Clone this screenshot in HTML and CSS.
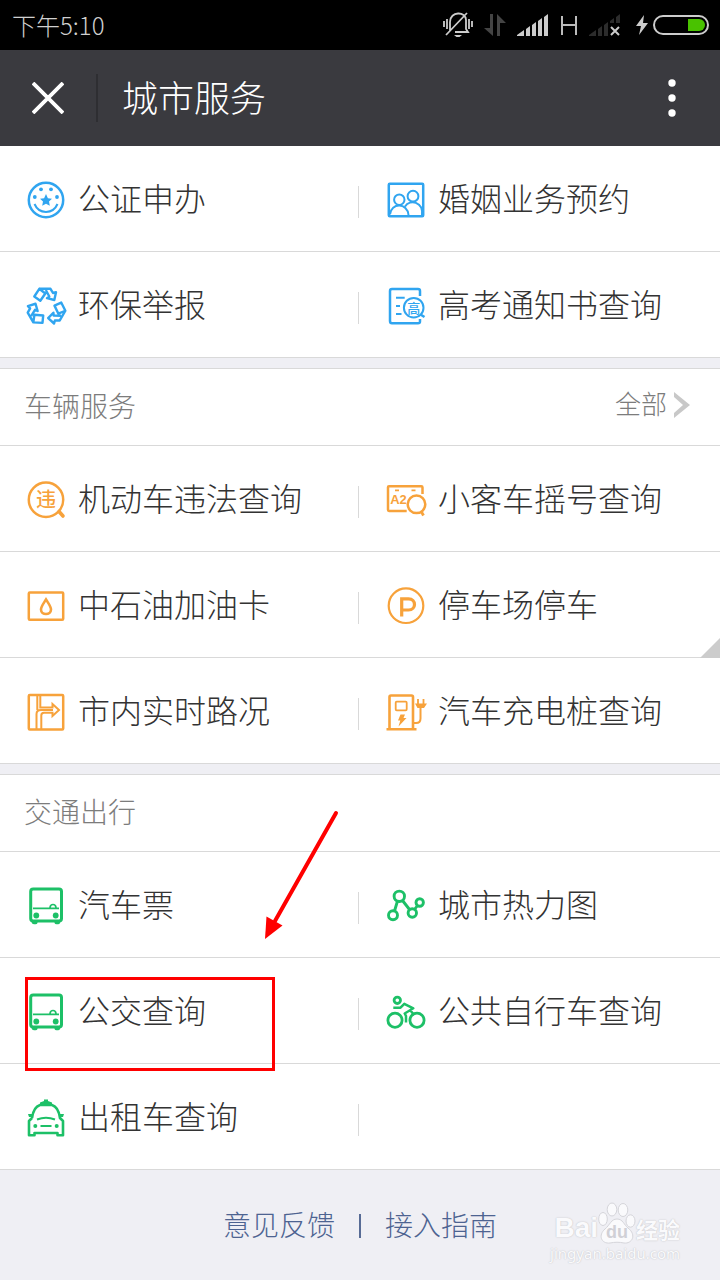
FILE: index.html
```html
<!DOCTYPE html>
<html lang="zh-CN">
<head>
<meta charset="utf-8">
<meta name="viewport" content="width=device-width, initial-scale=1">
<title>城市服务</title>
<link rel="stylesheet" href="styles.css">
</head>
<body>
<svg class="sprite" aria-hidden="true">
  <symbol id="bus" viewBox="0 0 40 40">
    <rect x="4.700" y="3" width="30.800" height="32" rx="2.500" stroke-width="3"/>
    <path d="M7 22.300H33M24 21.500C24.500 17.500 29.500 17.500 30 21.500" stroke-width="1.700"/>
    <g fill="currentColor" stroke="none"><circle cx="10.300" cy="29.500" r="2.900"/><circle cx="29.700" cy="29.500" r="2.900"/><path d="M5.500 35H11.500V37Q11 38.300 9.500 38.300H8Q6 38.300 5.500 36zM28.500 35H34.500L34 37Q33.500 38.300 32 38.300H30.500Q29 38.300 28.500 37z"/></g>
  </symbol>
</svg>

<div class="status">
  <time class="clock">下午5:10</time>
  <div class="indicators">
    <svg width="30" height="26" viewBox="0 0 30 26" fill="none" stroke="#ccc" stroke-width="1.800"><path d="M1 9V15M4 7V17M26 7V17M29 9V15M7 19V10C7 -1 23 -1 23 8V17L25 20H12M3 23L24 1"/><path d="M11 23H19L16.500 25H13.500z" fill="#ccc" stroke="none"/></svg>
    <svg width="22" height="24" viewBox="0 0 22 24" fill="#444"><path d="M6 1H9V23L0 15H6zM13 1L22 10H16V23H13z"/></svg>
    <svg width="32" height="24" viewBox="0 0 32 24" fill="#ccc"><path d="M0 23V22L7 17V23zM9 23V16L13 13V23zM15 23V12L19 9V23zM21 23V8L25 5V23zM27 23V4L31 1V23z"/></svg>
    <svg width="18" height="24" viewBox="0 0 18 24" fill="none" stroke="#bbb" stroke-width="2"><path d="M2 3V22M16 3V22M2 12H16"/></svg>
    <svg width="32" height="24" viewBox="0 0 32 24" fill="#2c2c2c"><path d="M0 23V22L7 17V23zM9 23V16L13 13V23zM15 23V12L19 9V23zM21 10V8L25 5V10zM27 10V4L31 1V10z"/><path d="M22 14L30 22M30 14L22 22" stroke="#ccc" stroke-width="2"/></svg>
    <svg class="bolt" width="12" height="22" viewBox="0 0 12 22" fill="#ccc"><path d="M8 1L0 12H5L3 21L12 9H7z"/></svg>
    <svg class="battery" width="56" height="20" viewBox="0 0 56 20"><rect x="1" y="1" width="54" height="18" rx="9" fill="none" stroke="#ccc" stroke-width="2"/><path d="M35 4H46A6 6 0 0 1 46 16H35z" fill="#49c200"/></svg>
  </div>
</div>

<header class="bar">
  <button class="close" aria-label="关闭"><svg width="32" height="32" viewBox="0 0 32 32" fill="none" stroke="#fff" stroke-width="3.800"><path d="M1 1L31 31M31 1L1 31"/></svg></button>
  <h1 class="bar-title">城市服务</h1>
  <button class="more" aria-label="更多"><svg width="8" height="40" viewBox="0 0 8 40" fill="#fff"><circle cx="4" cy="5" r="3.700"/><circle cx="4" cy="20" r="3.700"/><circle cx="4" cy="35" r="3.700"/></svg></button>
</header>

<main>
  <section class="group blue">
    <div class="grid">
      <a class="cell" href="#"><svg class="icon" viewBox="0 0 40 40"><circle cx="20" cy="20" r="17.200" stroke-width="2.500"/><path d="M8.500 24C13 34.500 27 34.500 31.500 24" stroke-width="2"/><g fill="currentColor" stroke="none"><circle cx="15" cy="9.300" r="1.900"/><circle cx="25" cy="9.300" r="1.900"/><circle cx="8.800" cy="17" r="1.900"/><circle cx="31" cy="17" r="1.900"/><path d="M20 14L21.900 18.200L26 18.700L23 21.500L23.800 25.800L20 23.700L16.200 25.800L17 21.500L14 18.700L18.100 18.200z"/></g></svg><span class="name">公证申办</span></a>
      <a class="cell" href="#"><svg class="icon" viewBox="0 0 40 40"><rect x="2.800" y="3.700" width="34.400" height="32.600" rx="1" stroke-width="2.500"/><g stroke-width="2"><circle cx="13.300" cy="19.700" r="5.200"/><circle cx="27" cy="16.200" r="5.400"/><path d="M4 34.500C5 22.500 21.500 22.500 22.500 35M19 26.500C24 18.500 37.500 22 36 35"/></g></svg><span class="name">婚姻业务预约</span></a>
      <a class="cell" href="#"><svg class="icon" viewBox="0 0 40 40" stroke-width="2.400" stroke-linejoin="round"><g id="loop"><path d="M13.300 2.800H24.500L27 7L30 6.200L28.300 14L21 12.200L23.300 10.500L19.800 4M13.300 2.800L8.300 10.500L14.300 14.800L19.300 7.500z"/></g><use href="#loop" transform="rotate(120 20 21.300)"/><use href="#loop" transform="rotate(240 20 21.300)"/></svg><span class="name">环保举报</span></a>
      <a class="cell" href="#"><svg class="icon" viewBox="0 0 40 40"><path d="M34 10V5Q34 3 32 3H6Q4 3 4 5V35Q4 37.300 6 37.300H32Q34 37.300 34 35.500V33" stroke-width="2.500"/><path d="M10 11.700H18.700M10 20H14M10 28H15.500" stroke-width="2"/><circle cx="27.700" cy="21.700" r="9.800" stroke-width="2"/><path d="M34.500 28.500L38.500 31" stroke-width="2.600"/><text class="glyph" x="27.700" y="26.500" font-size="13">高</text></svg><span class="name">高考通知书查询</span></a>
    </div>
  </section>

  <section class="group orange">
    <div class="group-head"><h2 class="group-title">车辆服务</h2><a class="all" href="#"><span>全部</span><svg width="18" height="28" viewBox="0 0 18 28" fill="#c8c8c8"><path d="M1 1L17 14L1 27V22L10 14L1 6z"/></svg></a></div>
    <div class="grid">
      <a class="cell" href="#"><svg class="icon" viewBox="0 0 40 40"><circle cx="20" cy="19.700" r="17.200" stroke-width="2.500"/><path d="M33 31.500L37 36" stroke-width="3.600" stroke-linecap="round"/><text class="glyph" x="20" y="27" font-size="20">违</text></svg><span class="name">机动车违法查询</span></a>
      <a class="cell" href="#"><svg class="icon" viewBox="0 0 40 40"><path d="M36.500 14V7.500Q36.500 6.300 35.300 6.300H3Q2 6.300 2 7.300V29.700Q2 30.900 3 30.900H20.700" stroke-width="2.500"/><path d="M9 10.300H13M25.500 10.300H29.500" stroke-width="1.800"/><circle cx="30.500" cy="24.300" r="8.800" stroke-width="2.500"/><path d="M35.500 32L37.500 35.500" stroke-width="2.800"/><text class="glyph latin" x="12.500" y="24" font-size="13">A2</text></svg><span class="name">小客车摇号查询</span></a>
      <a class="cell" href="#"><svg class="icon" viewBox="0 0 40 40"><rect x="2.800" y="6.500" width="34.400" height="27.300" rx="1" stroke-width="2.500"/><path d="M20 13.500C17.500 17.500 15 20.500 15 23.500C15 29.500 25 29.500 25 23.500C25 20.500 22.500 17.500 20 13.500z" stroke-width="2.600"/></svg><span class="name">中石油加油卡</span></a>
      <a class="cell" href="#"><svg class="icon" viewBox="0 0 40 40"><circle cx="20" cy="19.700" r="17.300" stroke-width="2.200"/><path d="M15.700 30.500V12.800H22.500C30.500 12.800 30.500 24 22.500 24H15.700" stroke-width="3.200"/></svg><span class="name">停车场停车</span></a>
      <a class="cell" href="#"><svg class="icon" viewBox="0 0 40 40"><rect x="2.800" y="3" width="34.400" height="34.500" rx="1" stroke-width="2.500"/><path d="M11.300 3V18M14.300 3V15.500H26.500V12L33 18L26.500 24V20.800H18Q15.300 20.800 15.300 23.500V37.500M10.500 37.500V22Q10.500 18 15 18H27" stroke-width="2"/></svg><span class="name">市内实时路况</span></a>
      <a class="cell" href="#"><svg class="icon" viewBox="0 0 40 40"><path d="M3.500 37V5Q3.500 3.500 5 3.500H25.500Q27 3.500 27 5V37M.500 37.300H30.500" stroke-width="2.600"/><rect x="9.700" y="9.700" width="11" height="8.600" rx="1" stroke-width="1.800"/><path d="M28 31H30Q34.500 31 34.500 26.500V15" stroke-width="2"/><path d="M32 7V12M37.500 7V12" stroke-width="1.800"/><path d="M29 11.500H41L38 16H31.500zM14.500 22.500H19L17.500 26H20.500L12.500 34.500L14.300 28.500H12z" fill="currentColor" stroke="none"/></svg><span class="name">汽车充电桩查询</span></a>
    </div>
    <i class="corner"></i>
  </section>

  <section class="group green">
    <div class="group-head"><h2 class="group-title">交通出行</h2></div>
    <div class="grid">
      <a class="cell" href="#"><svg class="icon"><use href="#bus"/></svg><span class="name">汽车票</span></a>
      <a class="cell" href="#"><svg class="icon" viewBox="0 0 40 40" stroke-width="2.900"><circle cx="13.300" cy="10.300" r="5.200"/><circle cx="7" cy="29.300" r="4.500"/><circle cx="26.300" cy="27" r="4.200"/><circle cx="33.700" cy="16.500" r="3.700"/><path d="M11.500 15L8.500 25M16.500 14.500L23.500 23.500M28.500 23.500L31.500 19.500"/></svg><span class="name">城市热力图</span></a>
      <a class="cell" href="#"><svg class="icon"><use href="#bus"/></svg><span class="name">公交查询</span></a>
      <a class="cell" href="#"><svg class="icon" viewBox="0 0 40 40" stroke-width="2.800"><circle cx="11.300" cy="8.300" r="3.200"/><circle cx="9" cy="28.300" r="7.100"/><circle cx="31" cy="28.300" r="7.100"/><path d="M7.300 15.700H14.500L18.300 11.800L27.300 16.300L18.700 21.500L20 24V30.500M24.500 18.500L28 23" stroke-width="2.500" stroke-linejoin="round"/></svg><span class="name">公共自行车查询</span></a>
      <a class="cell" href="#"><svg class="icon" viewBox="0 0 40 40"><path d="M6 20C7 13 9 8.500 14 7H26C31 8.500 33 13 34 20L37 23V37.300H31.500V35H8.500V37.300H3V23L6 20" stroke-width="2.600" stroke-linejoin="round"/><path d="M11 21.500Q20 18 29 21.500M14.500 28H25.500" stroke-width="2"/><path d="M14 6V4.500L18 3V1.500H22V3L26 4.500V6zM2 16H6.500V19H3zM38 16H33.500V19H37z" fill="currentColor" stroke="none"/><circle cx="9.300" cy="28" r="2" fill="currentColor" stroke="none"/><circle cx="30.700" cy="28" r="2" fill="currentColor" stroke="none"/></svg><span class="name">出租车查询</span></a>
      <div class="cell"></div>
    </div>
    <i class="mark-box"></i>
    <svg class="mark-arrow" width="76" height="132" viewBox="0 0 76 132"><path d="M73 4L12 112" stroke="#f00" stroke-width="4" stroke-linecap="round"/><path d="M2 130L3.500 107.500L19.500 116.500z" fill="#f00"/></svg>
  </section>
</main>

<footer class="foot">
  <a href="#">意见反馈</a><i class="foot-sep"></i><a href="#">接入指南</a>
  <div class="watermark">
    <div class="brand"><span class="brand-text">Bai</span><span class="paw"><svg width="38" height="42" viewBox="0 0 38 42" fill="#fafafc" stroke="#d5d5da" stroke-width="1"><ellipse cx="14" cy="7.500" rx="4.800" ry="6.500"/><ellipse cx="25" cy="8" rx="4.800" ry="6.500"/><ellipse cx="5" cy="17" rx="4.300" ry="6.500"/><ellipse cx="32.500" cy="19" rx="4.500" ry="6.200"/><path d="M19 17C25 17 26 23 30 26C39 33 34 42 26 41C21 40 17 40 12 41C3 42 0 33 7 27C12 23 13 17 19 17z"/></svg><span class="du">du</span></span><span class="brand-cn">经验</span></div>
    <div class="domain">jingyan.baidu.com</div>
  </div>
</footer>
</body>
</html>
```
FILE: styles.css
```css
* { box-sizing: border-box; }

body {
  margin: 0;
  min-height: 100vh;
  display: flex;
  flex-direction: column;
  background: #efeff4;
  color: #333;
  font-family: "Noto Sans CJK SC", "Noto Sans", sans-serif;
  font-weight: 300;
}

a { color: inherit; text-decoration: none; }
h1, h2 { margin: 0; font-weight: inherit; }
button { border: 0; padding: 0; background: none; }
svg { display: block; flex: none; }
.sprite { position: absolute; width: 0; height: 0; }

.status {
  height: 50px;
  padding: 0 11px 0 12px;
  display: flex;
  align-items: center;
  justify-content: space-between;
  background: #000;
  color: #d0d0d0;
}
.clock { font-size: 24px; line-height: 32px; }
.indicators { display: flex; align-items: center; gap: 11px; }
.bolt { margin-left: 4px; }
.battery { margin-left: -6px; }

.bar {
  height: 96px;
  display: flex;
  align-items: center;
  background: #3a3a3f;
  color: #fff;
}
.close {
  width: 98px;
  height: 48px;
  padding-left: 32px;
  display: flex;
  align-items: center;
  border-right: 2px solid #2e2e32;
}
.bar-title {
  flex: 1;
  padding: 0 0 4px 24px;
  font-size: 36px;
  line-height: 48px;
}
.more { padding: 4px 44px; }

.group {
  position: relative;
  margin-bottom: 10px;
  border-top: 1px solid #d9d9d9;
  background: #fff;
}
.group:first-child { border-top: 0; }
.group:last-child { margin-bottom: 0; }
.blue { --tint: #30a5f0; }
.orange { --tint: #f7a23b; }
.green { --tint: #1dc067; }

.group-head {
  height: 77px;
  padding: 0 29px 4px 24px;
  display: flex;
  align-items: center;
  justify-content: space-between;
  border-bottom: 1px solid #d9d9d9;
  color: #7c7c7c;
}
.group-title { font-size: 28px; line-height: 40px; }
.all {
  display: flex;
  align-items: center;
  gap: 6px;
  font-size: 26px;
  line-height: 36px;
}
.all span { padding-bottom: 4px; }

.grid { display: grid; grid-template-columns: 1fr 1fr; }
.cell {
  height: 106px;
  padding-left: 26px;
  display: flex;
  align-items: center;
  gap: 12px;
  border-bottom: 1px solid #d9d9d9;
  font-size: 32px;
  line-height: 48px;
  white-space: nowrap;
}
.cell:nth-child(odd)::after {
  content: "";
  width: 1px;
  height: 32px;
  margin: 6px 1px 0 auto;
  background: #d9d9d9;
}
.name { padding-bottom: 4px; }
.icon {
  width: 40px;
  height: 40px;
  margin-top: 2px;
  overflow: visible;
  fill: none;
  stroke: currentColor;
  color: var(--tint);
}
.glyph {
  fill: currentColor;
  stroke: none;
  text-anchor: middle;
  font-weight: 500;
}
.latin { font-family: "Liberation Sans", sans-serif; font-weight: 700; }

.corner {
  position: absolute;
  right: 0;
  top: 269px;
  border-left: 20px solid transparent;
  border-bottom: 20px solid #ccc;
}
.mark-box {
  position: absolute;
  left: 25px;
  top: 202px;
  width: 250px;
  height: 94px;
  border: 3px solid #f00;
}
.mark-arrow { position: absolute; left: 263px; top: 34px; }

.foot {
  position: relative;
  flex: 1;
  min-height: 110px;
  padding-bottom: 2px;
  display: flex;
  align-items: center;
  justify-content: center;
  gap: 24px;
  color: #4d6391;
  font-size: 28px;
  line-height: 40px;
}
.foot-sep { width: 2px; height: 24px; margin-top: 4px; background: #576b95; }

.watermark {
  position: absolute;
  right: 40px;
  bottom: 18px;
  color: #fafafc;
  text-shadow: 0 0 1px #c4c4c8, 0 0 2px #d4d4d8;
}
.brand { display: flex; align-items: flex-end; justify-content: flex-end; }
.brand-text { font: 700 28px/32px "Liberation Sans", sans-serif; }
.paw { position: relative; }
.du {
  position: absolute;
  left: 0;
  right: 0;
  bottom: 2px;
  text-align: center;
  color: #d0d0d6;
  text-shadow: none;
  font: 700 18px/20px "Liberation Sans", sans-serif;
}
.brand-cn { font-size: 22px; line-height: 32px; font-weight: 700; }
.domain { font: 400 15px/18px "Noto Sans", sans-serif; }
```
